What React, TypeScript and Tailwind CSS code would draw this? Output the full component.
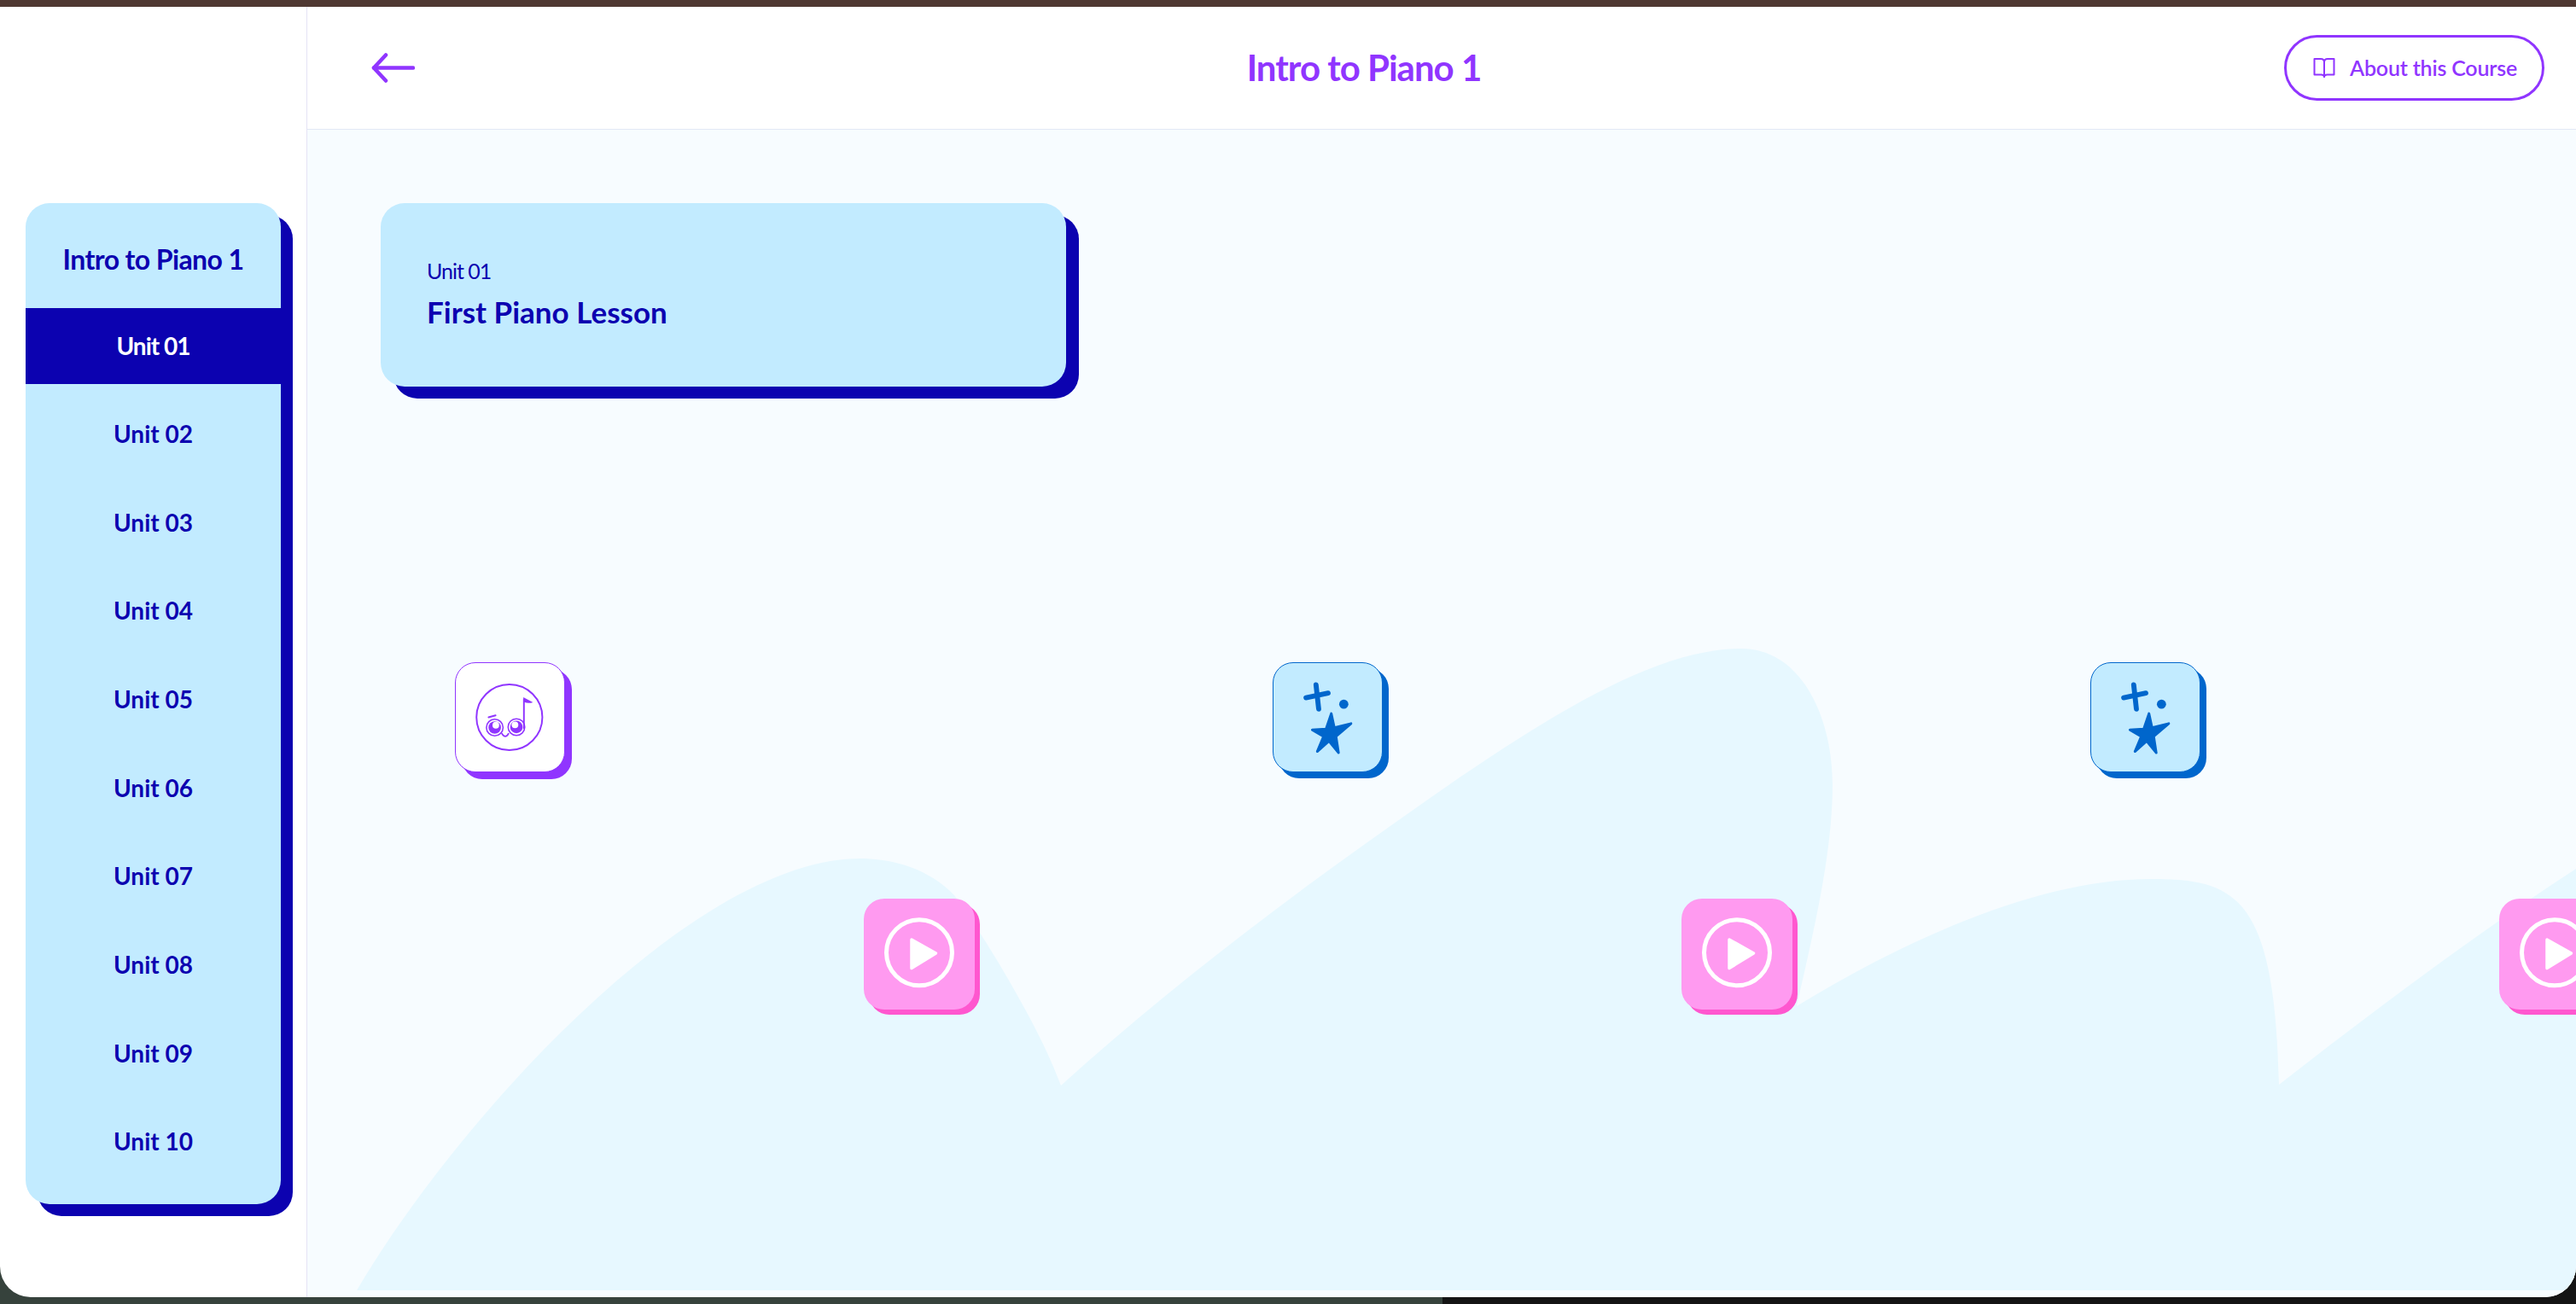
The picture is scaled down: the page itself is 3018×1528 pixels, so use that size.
import React from "react";

const units = ["Unit 02", "Unit 03", "Unit 04", "Unit 05", "Unit 06", "Unit 07", "Unit 08", "Unit 09", "Unit 10"];

const wavePath =
  "M418 1512 C530 1320 810 1006 1008 1006 C1050 1006 1090 1020 1118 1049 C1148 1089 1218 1202 1243 1272 " +
  "C1400 1130 1560 1015 1710 911 C1830 830 1945 760 2040 760 C2110 760 2147 840 2147 919 C2147 1000 2125 1090 2105 1179 " +
  "C2250 1090 2400 1030 2520 1030 C2620 1030 2665 1050 2670 1271 C2780 1185 2900 1095 3018 1018 L3018 1512 Z";

const NoteFace = () => (
  <svg viewBox="0 0 130 130" className="h-full w-full" fill="none">
    <circle cx="64.3" cy="65" r="39.5" stroke="#9035ff" strokeWidth="2" />
    <circle cx="46.7" cy="77.3" r="10" stroke="#9035ff" strokeWidth="1.6" />
    <circle cx="46.7" cy="77.3" r="7.5" fill="#9035ff" />
    <circle cx="48" cy="74.5" r="4" fill="#ffffff" />
    <circle cx="72.7" cy="76.7" r="10" stroke="#9035ff" strokeWidth="1.6" />
    <circle cx="72.7" cy="76.7" r="7.5" fill="#9035ff" />
    <circle cx="71" cy="74" r="4" fill="#ffffff" />
    <path d="M55 84 Q59.5 92 63.5 84" stroke="#9035ff" strokeWidth="1.8" />
    <path d="M39.3 65 L47.7 62.7" stroke="#9035ff" strokeWidth="2" strokeLinecap="round" />
    <path d="M81.7 79 V42.5" stroke="#9035ff" strokeWidth="2" />
    <path d="M81 41 L92.5 47 Q87 49 81.5 46.5 Z" fill="#9035ff" />
  </svg>
);

const Stars = () => (
  <svg viewBox="0 0 130 130" className="h-full w-full" fill="#0066cc" stroke="#0066cc" strokeLinejoin="round" strokeLinecap="round">
    <path d="M51 26 L54.2 55" strokeWidth="6" fill="none" />
    <path d="M39 41.5 L65.5 36" strokeWidth="6" fill="none" />
    <circle cx="84.3" cy="49.3" r="5.5" stroke="none" />
    <polygon strokeWidth="3" points="69.3,60.5 73,77.5 93,72.5 75,88 78,107.5 66.5,93.5 52.5,106 60,88 46.5,80 63,79" />
  </svg>
);

const Play = () => (
  <svg viewBox="0 0 130 130" className="h-full w-full" fill="none">
    <circle cx="65" cy="63.3" r="38.5" stroke="#ffffff" strokeWidth="5" />
    <path d="M56 48 L84.5 64 L56 81.5 Z" fill="#ffffff" stroke="#ffffff" strokeWidth="3.5" strokeLinejoin="round" />
  </svg>
);

const LessonTile = () => (
  <div className="h-[129px] w-[129px] shrink-0 rounded-[24px] border-[1.5px] border-[#9035ff] bg-white shadow-[8px_8px_0_#9035ff]">
    <NoteFace />
  </div>
);

const StarTile = () => (
  <div className="h-[129px] w-[129px] shrink-0 rounded-[24px] border-[1.5px] border-[#0066cc] bg-[#c2ebff] shadow-[7px_7px_0_#0066cc]">
    <Stars />
  </div>
);

const PlayTile = () => (
  <div className="h-[130px] w-[130px] shrink-0 rounded-[24px] bg-[#ff9af0] shadow-[6px_6px_0_#ff57cf]">
    <Play />
  </div>
);

export default function App() {
  return (
    <div className="flex h-[1528px] w-[3018px] flex-col overflow-hidden bg-[linear-gradient(90deg,#36423c_0_56%,#141414_56%)] font-['Lato',sans-serif]">
      <div className="h-2 shrink-0 bg-[#4f3832]" />
      <div className="flex h-[1512px] shrink-0 overflow-hidden rounded-b-[36px] bg-white">
        <aside className="w-[360px] shrink-0 border-r border-[#e5e3f5] pl-[30px] pt-[230px]">
          <div className="w-[299px] overflow-hidden rounded-[28px] bg-[#c2ebff] text-[#0c02b0] shadow-[14px_14px_0_#0c02b0]">
            <div className="flex h-[123px] items-center justify-center pt-[9px] text-[32px] font-bold tracking-[-0.6px]">Intro to Piano 1</div>
            <div className="flex h-[89px] items-center justify-center bg-[#0c02b0] pb-[2px] text-[28px] font-bold tracking-[-1px] text-white">Unit 01</div>
            <div className="mt-[6px] pb-[22px]">
              {units.map((unit) => (
                <div key={unit} className="flex h-[103.7px] items-center justify-center text-[28px] font-bold">
                  {unit}
                </div>
              ))}
            </div>
          </div>
        </aside>

        <main className="flex min-w-0 flex-1 flex-col">
          <header className="flex h-[144px] shrink-0 items-center justify-between border-b border-[#e2e8f5] pl-[75px] pr-[37px]">
            <div className="w-[85px]">
              <svg width="51" height="35" viewBox="0 0 51 35" fill="none" stroke="#9035ff" strokeWidth="4.5" strokeLinecap="round" strokeLinejoin="round">
                <path d="M3 17.5 H49" />
                <path d="M17 2.5 L3 17.5 L17 32.5" />
              </svg>
            </div>
            <h1 className="text-[42px] font-bold tracking-[-1px] text-[#9035ff]">Intro to Piano 1</h1>
            <button className="flex h-[77px] w-[305px] items-center gap-[17px] rounded-full border-[3px] border-[#9035ff] pl-[31px] text-[25px] font-semibold tracking-[-0.2px] text-[#9035ff]">
              <svg width="26" height="26" viewBox="0 0 26 26" fill="none" stroke="#9035ff" strokeWidth="2" strokeLinejoin="round">
                <path d="M1.5 2 H9 Q13 2 13 6 V23 Q13 20.5 9.5 20.5 H1.5 Z" />
                <path d="M24.5 2 H17 Q13 2 13 6 V23 Q13 20.5 16.5 20.5 H24.5 Z" />
              </svg>
              About this Course
            </button>
          </header>

          <section className="relative flex-1 overflow-hidden bg-[#f7fcff] pl-[86px] pt-[86px]">
            <svg className="absolute inset-0" width="2658" height="1368" viewBox="360 152 2658 1368">
              <path d={wavePath} fill="#e7f8ff" />
            </svg>
            <div className="relative">
              <div className="flex h-[215px] w-[803px] flex-col justify-center rounded-[28px] bg-[#c2ebff] px-[54px] pb-[4px] text-[#0c02b0] shadow-[15px_14px_0_#0c02b0]">
                <p className="text-[25px] leading-[32px] tracking-[-1px]">Unit 01</p>
                <p className="mt-[10px] text-[35px] font-bold leading-[44px]">First Piano Lesson</p>
              </div>
              <div className="ml-[87px] mt-[323px] flex gap-[829px]">
                <LessonTile />
                <StarTile />
                <StarTile />
              </div>
              <div className="ml-[566px] mt-[148px] flex gap-[828px]">
                <PlayTile />
                <PlayTile />
                <PlayTile />
              </div>
            </div>
          </section>
        </main>
      </div>
    </div>
  );
}
